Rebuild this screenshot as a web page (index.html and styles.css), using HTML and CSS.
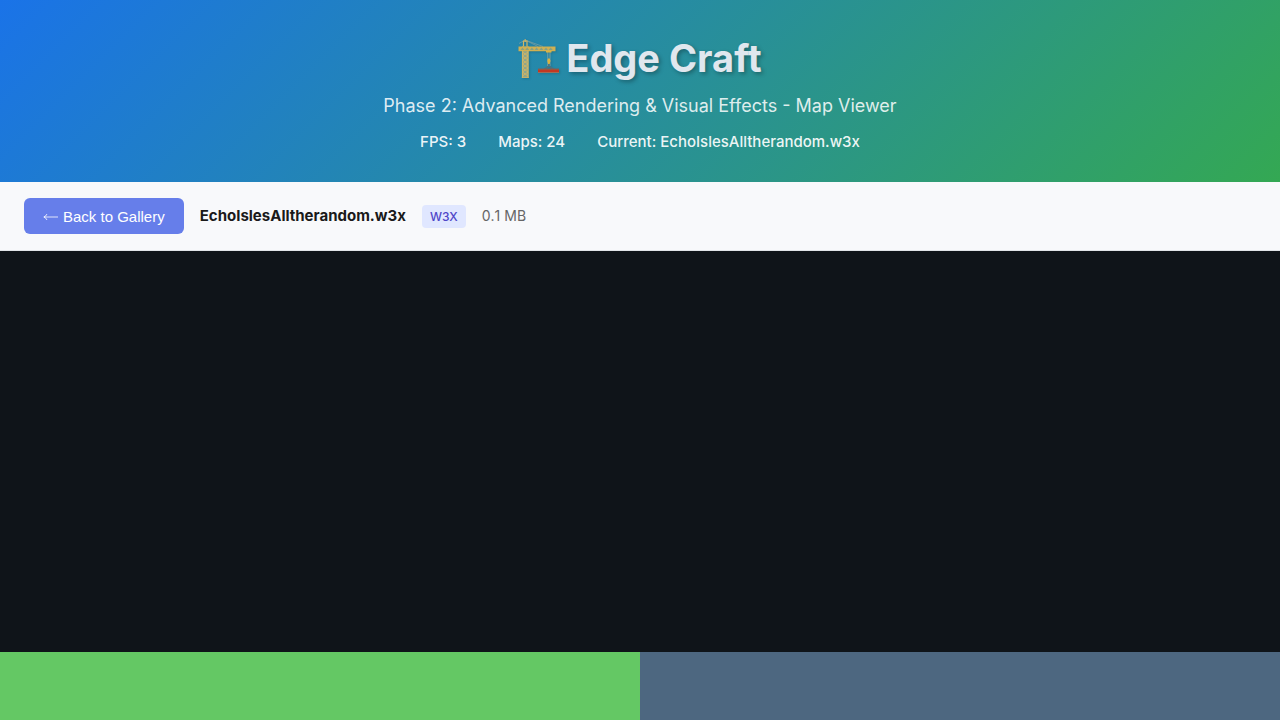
FILE: index.html
```html
<!DOCTYPE html>
<html lang="en">
<head>
<meta charset="utf-8">
<meta name="viewport" content="width=device-width, initial-scale=1">
<title>Edge Craft</title>
<link rel="stylesheet" href="styles.css">
</head>
<body>
<div class="app">
  <header class="header">
    <h1 class="title">
      <svg class="crane" viewBox="0 0 42 41" aria-hidden="true">
        <g fill="none" stroke="#7fa3a4" stroke-width=".7">
          <path d="M1 5.5 7 2l13 6.5M7 2l18 6.5"/>
        </g>
        <path d="M4 8.5h6.5v31H4z" fill="#8fa58a"/>
        <g fill="none" stroke="#d0b565" stroke-width="1.2">
          <path d="M4.5 39.5V8.5M10 39.5V8.5M5.5 8.5V3h3.5v5.5M7.2 1.3V4"/>
          <path d="M4.5 14l5.5 4-5.5 4 5.5 4-5.5 4 5.5 4-5.5 4M10 14l-5.5 4 5.5 4-5.5 4 5.5 4-5.5 4 5.5 4" stroke-width=".9"/>
          <path d="M3.8 39.4h7" stroke-width="1"/>
        </g>
        <path d="M.5 8.5h37v4.8H.5z" fill="#d0b052"/>
        <path d="M2.5 12l2-2.4 2 2.4zm4.7 0l2-2.4 2 2.4zm4.7 0l2-2.4 2 2.4zm4.7 0l2-2.4 2 2.4zm4.7 0l2-2.4 2 2.4zm4.7 0l2-2.4 2 2.4zm4.7 0l2-2.4 2 2.4z" fill="#8aa181"/>
        <path d="M29.8 13.3V28M32 13.3V28" fill="none" stroke="#8ba8a4" stroke-width=".8"/>
        <path d="M28 13h5.5v1.6H28zM30 20.5h1.8l.7 2.5-.9 3h-1.4l-.9-3z" fill="#dcb340"/>
        <path d="M30.9 26v2l-4.6 3M30.9 28l4.6 3" fill="none" stroke="#566e78" stroke-width="1.1"/>
        <path d="M20 30.8h21v4H20z" fill="#c23722"/>
        <path d="M20 30.8h21v.8H20z" fill="#806a57"/>
        <path d="M20 34.3h21v.5H20z" fill="#a09777"/>
      </svg>
      <span>Edge Craft</span>
    </h1>
    <p class="subtitle">Phase 2: Advanced Rendering &amp; Visual Effects - Map Viewer</p>
    <div class="stats">
      <span>FPS: 3</span>
      <span>Maps: 24</span>
      <span>Current: EchoIslesAlltherandom.w3x</span>
    </div>
  </header>
  <main class="viewer">
    <div class="toolbar">
      <button class="back" type="button">
        <svg class="arrow" viewBox="0 0 15 10" aria-hidden="true"><path d="M15 6H1M4 3Q3 5.3.8 6 3 6.7 4 9"/></svg>
        <span>Back to Gallery</span>
      </button>
      <strong class="map-name">EchoIslesAlltherandom.w3x</strong>
      <span class="format">W3X</span>
      <span class="size">0.1 MB</span>
    </div>
    <div class="scene">
      <div class="sky"></div>
      <div class="ground">
        <div class="grass"></div>
        <div class="water"></div>
      </div>
    </div>
  </main>
</div>
</body>
</html>
```
FILE: styles.css
```css
* {
  box-sizing: border-box;
}

body {
  margin: 0;
  font-family: Inter, "Liberation Sans", sans-serif;
  line-height: 24px;
  color: #1a1a1a;
}

.app {
  display: flex;
  flex-direction: column;
  min-height: 100vh;
}

.header {
  padding: 32px 32px 28px;
  text-align: center;
  color: rgba(255, 255, 255, 0.87);
  background: linear-gradient(135deg, #1a73e8 0%, #34a853 100%);
}

.title {
  display: flex;
  justify-content: center;
  align-items: center;
  gap: 6px;
  margin: 0 0 8px;
  font-size: 38px;
  line-height: 52px;
  font-weight: 700;
  color: #e0e7ee;
  text-shadow: 2px 2px 4px rgba(0, 0, 0, 0.3);
}

.crane {
  width: 42px;
  height: 41px;
  filter: drop-shadow(1px 1px 1px rgba(0, 0, 0, 0.15));
}

.subtitle {
  margin: 0 0 10px;
  font-size: 18px;
  line-height: 28px;
  font-weight: 400;
  color: rgba(255, 255, 255, 0.86);
}

.stats {
  display: flex;
  justify-content: center;
  gap: 32px;
  font-size: 15px;
  font-weight: 500;
  color: rgba(255, 255, 255, 0.93);
}

.viewer {
  display: flex;
  flex: 1;
  flex-direction: column;
}

.toolbar {
  display: flex;
  align-items: center;
  gap: 16px;
  padding: 16px 24px;
  border-bottom: 1px solid #e1e4e8;
  background: #f8f9fb;
}

.back {
  display: flex;
  align-items: center;
  gap: 5px;
  height: 36px;
  padding: 0 19px;
  border: 0;
  border-radius: 6px;
  font-family: "Liberation Sans", Arial, sans-serif;
  font-size: 15px;
  color: #fff;
  background: #667eea;
  cursor: pointer;
}

.arrow {
  width: 15px;
  height: 10px;
  fill: none;
  stroke: rgba(255, 255, 255, 0.8);
  stroke-width: 1;
}

.map-name {
  font-size: 15px;
  font-weight: 700;
}

.format {
  padding: 0 8px;
  border-radius: 4px;
  font-size: 12px;
  line-height: 23px;
  font-weight: 500;
  color: #4f46c8;
  background: #e0e7ff;
}

.size {
  font-size: 14px;
  font-kerning: none;
  color: #666;
}

.scene {
  display: flex;
  flex: 1;
  flex-direction: column;
}

.sky {
  flex: 1;
  background: #0f1419;
}

.ground {
  display: grid;
  grid-template-columns: 1fr 1fr;
  height: 68px;
}

.grass {
  background: #64c864;
}

.water {
  background: #4d6780;
}
```
